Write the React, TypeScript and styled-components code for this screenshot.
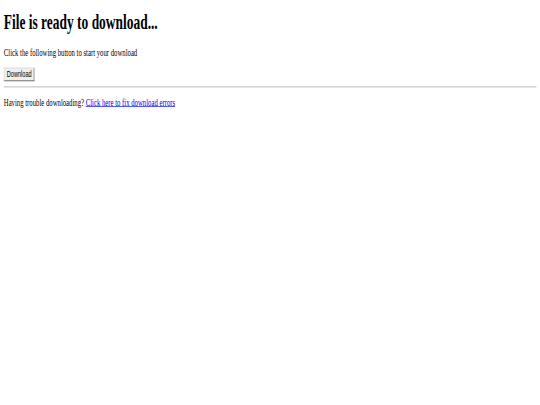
import React from "react";
import styled, { createGlobalStyle } from "styled-components";

const SX = 0.42;
const SY = 0.656;

const Global = createGlobalStyle`
  html, body { margin: 0; padding: 0; background: #ffffff; overflow: hidden; }
  #root { width: 540px; height: 405px; overflow: hidden; }
`;

const Page = styled.div`
  width: ${540 / SX}px;
  transform: scale(${SX}, ${SY});
  transform-origin: 0 0;
  padding: 0 9px;
  box-sizing: border-box;
  font-family: "Liberation Serif", "Times New Roman", serif;
  font-size: 16px;
  color: #000;
  display: flow-root;
`;

const Title = styled.h1`
  font-size: 32px;
  font-weight: bold;
  margin: 15px 0 20px;
`;

const Text = styled.p<{ $top?: number; $bottom?: number }>`
  margin: ${(p) => p.$top ?? 16}px 0 ${(p) => p.$bottom ?? 16}px;
`;

const Button = styled.button`
  font-family: "Liberation Sans", Arial, sans-serif;
  font-size: 13.33px;
  padding: 1px 5px;
  border: 2px outset #e4e4e4;
  background: #efefef;
  color: #000;
`;

const Rule = styled.hr`
  margin: 8px 0;
  border: 0;
  border-top: 1px solid #9a9a9a;
  border-bottom: 1px solid #e6e6e6;
`;

const Link = styled.a`
  color: #0000ee;
  text-decoration: underline;
`;

export default function App() {
  return (
    <>
      <Global />
      <Page>
        <Title>File is ready to download...</Title>
        <Text $bottom={13}>Click the following button to start your download</Text>
        <Button type="button">Download</Button>
        <Rule />
        <Text $top={13}>
          Having trouble downloading? <Link href="#">Click here to fix download errors</Link>
        </Text>
      </Page>
    </>
  );
}
